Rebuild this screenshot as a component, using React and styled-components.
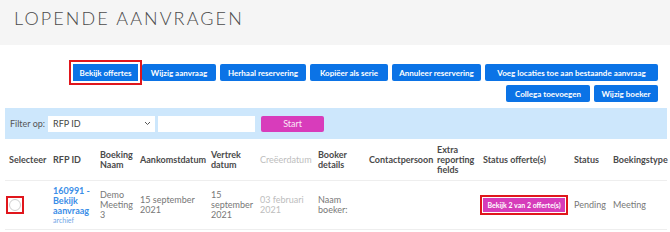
import React from 'react';
import styled, { createGlobalStyle } from 'styled-components';

const GlobalStyle = createGlobalStyle`
    body {
        margin: 0;
        background: #fff;
        font-family: Lato, "Noto Sans", sans-serif;
    }
`;

const Page = styled.div`
    width: 670px;
    height: 232px;
    overflow: hidden;
`;

const Header = styled.div`
    height: 45px;
    background: #f5f5f5;
    padding: 6px 14px 0;
    box-sizing: border-box;
`;

const Title = styled.h1`
    margin: 0;
    font-size: 18px;
    line-height: 24px;
    font-weight: 300;
    letter-spacing: 2.1px;
    color: #4a4a4a;
`;

const Toolbar = styled.div`
    display: flex;
    flex-wrap: wrap;
    justify-content: flex-end;
    gap: 4px;
    padding: 19px 12px 0 64px;
`;

const Button = styled.button`
    width: ${props => props.$w}px;
    height: 17px;
    padding: 0;
    border: none;
    border-radius: ${props => (props.$marked ? 0 : 2)}px;
    background: #0b73e6;
    color: #fff;
    font-family: inherit;
    font-size: 8px;
    font-weight: 700;
    white-space: nowrap;
    outline: ${props => (props.$marked ? '2px solid #e0161c' : 'none')};
    outline-offset: 2px;
`;

const FilterBar = styled.div`
    margin: 6px 3px 0 5px;
    height: 31px;
    background: #cde7fc;
    display: flex;
    align-items: center;
    padding: 0 5px;
    gap: 3px;
`;

const Label = styled.span`
    font-size: 9px;
    color: #555;
`;

const Select = styled.div`
    width: 107px;
    height: 16px;
    box-sizing: border-box;
    background: #fff;
    display: flex;
    align-items: center;
    justify-content: space-between;
    padding: 0 4px 0 5px;
    font-size: 9px;
    color: #444;
`;

const Input = styled.div`
    width: 97px;
    height: 16px;
    background: #fff;
`;

const StartButton = styled.button`
    width: 63px;
    height: 16px;
    margin-left: 3px;
    border: none;
    border-radius: 2px;
    background: #d83cbb;
    color: #fbe6f6;
    font-family: inherit;
    font-size: 9px;
`;

const Table = styled.table`
    margin-left: 5px;
    width: 662px;
    table-layout: fixed;
    border-collapse: collapse;
`;

const Col = styled.col`
    width: ${props => props.$w}px;
`;

const Th = styled.th`
    height: 41px;
    padding: 0 4px;
    text-align: left;
    vertical-align: middle;
    font-size: 9px;
    line-height: 10px;
    font-weight: ${props => (props.$muted ? 400 : 700)};
    color: ${props => (props.$muted ? '#bdbdbd' : '#4a4a4a')};
    border-bottom: 1px solid #eee;
`;

const Td = styled.td`
    height: 48px;
    padding: 0 4px;
    vertical-align: middle;
    font-size: 9px;
    line-height: 10px;
    color: ${props => (props.$muted ? '#bdbdbd' : '#777')};
    border-bottom: 1px solid #eee;
`;

const RfpLink = styled.a`
    display: block;
    color: #3a8ee8;
    font-weight: 700;
    text-decoration: none;
`;

const Archive = styled.span`
    display: block;
    font-size: 7px;
    line-height: 8px;
    color: #6fa5e6;
`;

const CheckFrame = styled.span`
    display: inline-flex;
    width: 18px;
    height: 18px;
    box-sizing: border-box;
    border: 2px solid #e0161c;
    align-items: center;
    justify-content: center;
    margin-left: -3px;
`;

const Radio = styled.span`
    width: 12px;
    height: 12px;
    border-radius: 50%;
    border: 1px solid #ccc;
    box-sizing: border-box;
    background: #fff;
`;

const Badge = styled.span`
    display: inline-block;
    width: 82px;
    height: 14px;
    line-height: 14px;
    text-align: center;
    background: #d63cba;
    color: #fff;
    font-size: 7px;
    font-weight: 700;
    white-space: nowrap;
    outline: 2px solid #e0161c;
    outline-offset: 1px;
`;

const widths = [44, 47, 40, 71, 49, 58, 51, 68, 46, 91, 39, 58];

const actions = [
    ['Bekijk offertes', 65],
    ['Wijzig aanvraag', 74],
    ['Herhaal reservering', 86],
    ['Kopiëer als serie', 78],
    ['Annuleer reservering', 89],
    ['Voeg locaties toe aan bestaande aanvraag', 173],
    ['Collega toevoegen', 84],
    ['Wijzig boeker', 64],
];

function App() {
    return (
        <Page>
            <GlobalStyle />
            <Header>
                <Title>LOPENDE AANVRAGEN</Title>
            </Header>
            <Toolbar>
                {actions.map(([label, w], i) => (
                    <Button key={label} $w={w} $marked={i === 0}>{label}</Button>
                ))}
            </Toolbar>
            <FilterBar>
                <Label>Filter op:</Label>
                <Select>
                    RFP ID
                    <svg width="7" height="5" viewBox="0 0 7 5">
                        <path d="M1 1l2.5 2.5L6 1" stroke="#555" strokeWidth="1" fill="none" />
                    </svg>
                </Select>
                <Input />
                <StartButton>Start</StartButton>
            </FilterBar>
            <Table>
                <colgroup>
                    {widths.map((w, i) => <Col key={i} $w={w} />)}
                </colgroup>
                <thead>
                    <tr>
                        <Th>Selecteer</Th>
                        <Th>RFP ID</Th>
                        <Th>Boeking Naam</Th>
                        <Th>Aankomstdatum</Th>
                        <Th>Vertrek datum</Th>
                        <Th $muted>Creëerdatum</Th>
                        <Th>Booker details</Th>
                        <Th>Contactpersoon</Th>
                        <Th>Extra reporting fields</Th>
                        <Th>Status offerte(s)</Th>
                        <Th>Status</Th>
                        <Th>Boekingstype</Th>
                    </tr>
                </thead>
                <tbody>
                    <tr>
                        <Td><CheckFrame><Radio /></CheckFrame></Td>
                        <Td>
                            <RfpLink href="#">160991 - Bekijk aanvraag</RfpLink>
                            <Archive>archief</Archive>
                        </Td>
                        <Td>Demo Meeting 3</Td>
                        <Td>15 september 2021</Td>
                        <Td>15 september 2021</Td>
                        <Td $muted>03 februari 2021</Td>
                        <Td>Naam boeker:</Td>
                        <Td />
                        <Td />
                        <Td><Badge>Bekijk 2 van 2 offerte(s)</Badge></Td>
                        <Td>Pending</Td>
                        <Td>Meeting</Td>
                    </tr>
                </tbody>
            </Table>
        </Page>
    );
}

export default App;
